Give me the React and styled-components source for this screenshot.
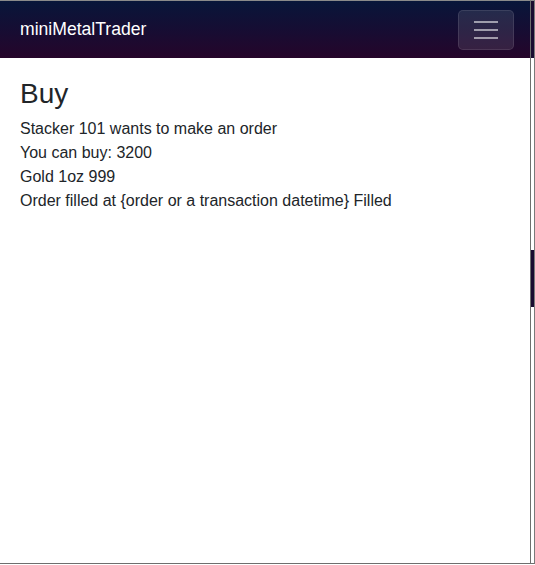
import React from "react";
import styled, { createGlobalStyle } from "styled-components";

const Global = createGlobalStyle`
  html, body {
    margin: 0;
    padding: 0;
    background: #fff;
  }
  body {
    font-family: "Liberation Sans", Arial, sans-serif;
    color: #212529;
  }
`;

const Frame = styled.div`
  display: flex;
  width: 535px;
  height: 565px;
  box-sizing: border-box;
`;

const Window = styled.div`
  width: 531px;
  height: 564px;
  box-sizing: border-box;
  border-top: 1px solid #8a8a8a;
  border-right: 1px solid #6e6e6e;
  border-bottom: 1px solid #6e6e6e;
  display: flex;
  flex-direction: column;
  background: #fff;
`;

const Edge = styled.div`
  width: 4px;
  height: 564px;
  box-sizing: border-box;
  border-right: 1px solid #7a7a7a;
  border-bottom: 1px solid #6e6e6e;
  display: flex;
  flex-direction: column;
`;

const EdgeBit = styled.div`
  height: ${(p) => p.h}px;
  background: ${(p) => p.bg};
`;

const Navbar = styled.nav`
  height: 57px;
  flex-shrink: 0;
  display: flex;
  align-items: center;
  justify-content: space-between;
  padding: 0 16px 0 20px;
  background: linear-gradient(180deg, #08163a 0%, #160d33 50%, #26052a 100%);
`;

const Brand = styled.a`
  color: #fff;
  font-size: 17.6px;
  text-decoration: none;
  cursor: pointer;
`;

const Toggler = styled.button`
  width: 56px;
  height: 40px;
  box-sizing: border-box;
  border: 1px solid rgba(255, 255, 255, 0.1);
  border-radius: 5px;
  background: rgba(255, 255, 255, 0.1);
  display: flex;
  flex-direction: column;
  align-items: center;
  justify-content: center;
  gap: 6px;
  padding: 0;
  cursor: pointer;
`;

const Bar = styled.span`
  display: block;
  width: 24px;
  height: 2px;
  background: rgba(255, 255, 255, 0.55);
`;

const Main = styled.main`
  padding: 19px 20px 16px;
`;

const Title = styled.h2`
  margin: 0 0 6px;
  font-size: 28px;
  font-weight: 500;
  line-height: 1.2;
`;

const Line = styled.div`
  font-size: 16px;
  line-height: 24px;
`;

export default function App() {
  return (
    <>
      <Global />
      <Frame>
        <Window>
          <Navbar>
            <Brand>miniMetalTrader</Brand>
            <Toggler aria-label="Toggle navigation">
              <Bar />
              <Bar />
              <Bar />
            </Toggler>
          </Navbar>
          <Main>
            <Title>Buy</Title>
            <Line>Stacker 101 wants to make an order</Line>
            <Line>You can buy: 3200</Line>
            <Line>Gold 1oz 999</Line>
            <Line>Order filled at {"{order or a transaction datetime}"} Filled</Line>
          </Main>
        </Window>
        <Edge>
          <EdgeBit h={1} bg="#8a8a8a" />
          <EdgeBit h={57} bg="#1a0c30" />
          <EdgeBit h={192} bg="#fff" />
          <EdgeBit h={57} bg="#1a0c30" />
        </Edge>
      </Frame>
    </>
  );
}
